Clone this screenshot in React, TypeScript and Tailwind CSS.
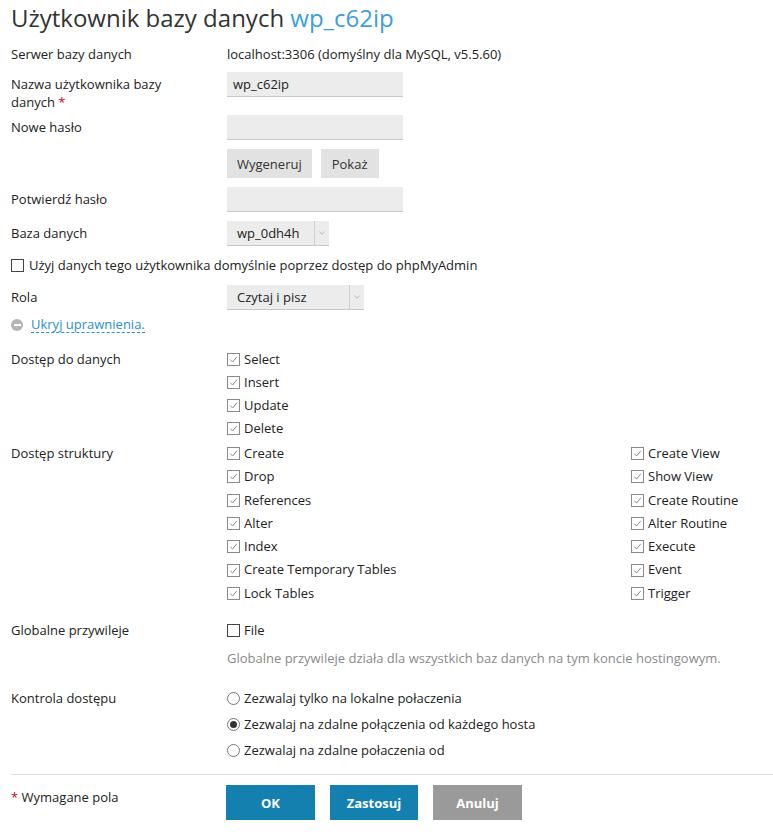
import { ChevronDown } from "lucide-react";

function Check({ checked }: { checked?: boolean }) {
  return (
    <span
      className={`inline-flex w-[13px] h-[13px] border bg-white items-center justify-center shrink-0 ${
        checked ? "border-[#8a8a8a]" : "border-[#444]"
      }`}
    >
      {checked && (
        <svg width="9" height="9" viewBox="0 0 9 9">
          <path d="M1.2 4.6 L3.6 7 L7.8 1.8" fill="none" stroke="#8a8a8a" strokeWidth="1" />
        </svg>
      )}
    </span>
  );
}

function Radio({ checked }: { checked?: boolean }) {
  return (
    <span className="inline-flex w-[13px] h-[13px] rounded-full border border-[#777] bg-white items-center justify-center shrink-0">
      {checked && <span className="w-[7px] h-[7px] rounded-full bg-[#333]" />}
    </span>
  );
}

function CheckItem({ label, checked = true }: { label: string; checked?: boolean }) {
  return (
    <div className="flex items-center gap-[4px]">
      <Check checked={checked} />
      <span>{label}</span>
    </div>
  );
}

function Select({ value, width }: { value: string; width: string }) {
  return (
    <div className={`flex h-[25px] bg-[#ececec] border-b border-[#c8c8c8] ${width}`}>
      <div className="flex-1 flex items-center pl-[10px]">{value}</div>
      <div className="w-[15px] border-l border-[#d0d0d0] flex items-center justify-center">
        <ChevronDown className="w-[10px] h-[10px] text-[#999]" strokeWidth={1.5} />
      </div>
    </div>
  );
}

function Input({ value = "" }: { value?: string }) {
  return (
    <div className="w-[176px] h-[25px] bg-[#ececec] border-b border-[#c8c8c8] flex items-center px-[6px]">
      {value}
    </div>
  );
}

export default function App() {
  const left = ["Create", "Drop", "References", "Alter", "Index", "Create Temporary Tables", "Lock Tables"];
  const right = ["Create View", "Show View", "Create Routine", "Alter Routine", "Execute", "Event", "Trigger"];

  return (
    <div
      className="min-h-screen bg-white text-[#222] text-[13px] leading-[18px] pl-[11px]"
      style={{ fontFamily: '"Open Sans", sans-serif' }}
    >
      <h1 className="text-[24px] leading-[36px] text-[#333]">
        Użytkownik bazy danych <span className="text-[#3a9ee0]">wp_c62ip</span>
      </h1>

      <div className="flex mt-[9px]">
        <div className="w-[216px]">Serwer bazy danych</div>
        <div>localhost:3306 (domyślny dla MySQL, v5.5.60)</div>
      </div>

      <div className="flex mt-[9px]">
        <div className="w-[216px] pt-[3px]">
          <div>Nazwa użytkownika bazy</div>
          <div>
            danych <span className="text-[#d0021b]">*</span>
          </div>
        </div>
        <Input value="wp_c62ip" />
      </div>

      <div className="flex mt-[4px]">
        <div className="w-[216px] pt-[3px]">Nowe hasło</div>
        <Input />
      </div>

      <div className="flex mt-[9px] pl-[216px] gap-[9px]">
        <button className="h-[29px] px-[10px] bg-[#e2e2e2] text-[#333]">Wygeneruj</button>
        <button className="h-[29px] px-[11px] bg-[#e2e2e2] text-[#333]">Pokaż</button>
      </div>

      <div className="flex mt-[9px]">
        <div className="w-[216px] pt-[3px]">Potwierdź hasło</div>
        <Input />
      </div>

      <div className="flex mt-[9px]">
        <div className="w-[216px] pt-[3px]">Baza danych</div>
        <Select value="wp_0dh4h" width="w-[102px]" />
      </div>

      <div className="flex items-center gap-[5px] mt-[10px]">
        <Check />
        <span>Użyj danych tego użytkownika domyślnie poprzez dostęp do phpMyAdmin</span>
      </div>

      <div className="flex mt-[11px]">
        <div className="w-[216px] pt-[3px]">Rola</div>
        <Select value="Czytaj i pisz" width="w-[137px]" />
      </div>

      <div className="flex items-center gap-[8px] mt-[6px]">
        <span className="w-[12px] h-[12px] rounded-full bg-[#b5b5b5] flex items-center justify-center">
          <span className="w-[7px] h-[2px] bg-white" />
        </span>
        <span className="text-[#2b8fd3] border-b border-dashed border-[#2b8fd3] leading-[16px]">
          Ukryj uprawnienia.
        </span>
      </div>

      <div className="flex mt-[15px]">
        <div className="w-[216px] leading-[23px]">Dostęp do danych</div>
        <div className="leading-[23px]">
          {["Select", "Insert", "Update", "Delete"].map((l) => (
            <CheckItem key={l} label={l} />
          ))}
        </div>
      </div>

      <div className="flex mt-[2px]">
        <div className="w-[216px] leading-[23.3px]">Dostęp struktury</div>
        <div className="w-[404px] leading-[23.3px]">
          {left.map((l) => (
            <CheckItem key={l} label={l} />
          ))}
        </div>
        <div className="leading-[23.3px]">
          {right.map((l) => (
            <CheckItem key={l} label={l} />
          ))}
        </div>
      </div>

      <div className="flex mt-[16px]">
        <div className="w-[216px]">Globalne przywileje</div>
        <div>
          <CheckItem label="File" checked={false} />
          <div className="mt-[10px] text-[#8a8a8a]">
            Globalne przywileje działa dla wszystkich baz danych na tym koncie hostingowym.
          </div>
        </div>
      </div>

      <div className="flex mt-[22px]">
        <div className="w-[216px]">Kontrola dostępu</div>
        <div className="flex flex-col gap-[8px]">
          {[
            ["Zezwalaj tylko na lokalne połaczenia", false],
            ["Zezwalaj na zdalne połączenia od każdego hosta", true],
            ["Zezwalaj na zdalne połaczenia od", false],
          ].map(([l, c]) => (
            <div key={l as string} className="flex items-center gap-[4px]">
              <Radio checked={c as boolean} />
              <span>{l as string}</span>
            </div>
          ))}
        </div>
      </div>

      <div className="mt-[15px] border-t border-[#dcdcdc]" />

      <div className="flex mt-[10px] pb-[17px]">
        <div className="w-[215px] pt-[3px]">
          <span className="text-[#d0021b]">*</span> Wymagane pola
        </div>
        <div className="flex gap-[15px]">
          <button className="w-[89px] h-[35px] bg-[#1380b0] text-white font-bold">OK</button>
          <button className="w-[88px] h-[35px] bg-[#1380b0] text-white font-bold">Zastosuj</button>
          <button className="w-[89px] h-[35px] bg-[#9a9a9a] text-white font-bold">Anuluj</button>
        </div>
      </div>
    </div>
  );
}
